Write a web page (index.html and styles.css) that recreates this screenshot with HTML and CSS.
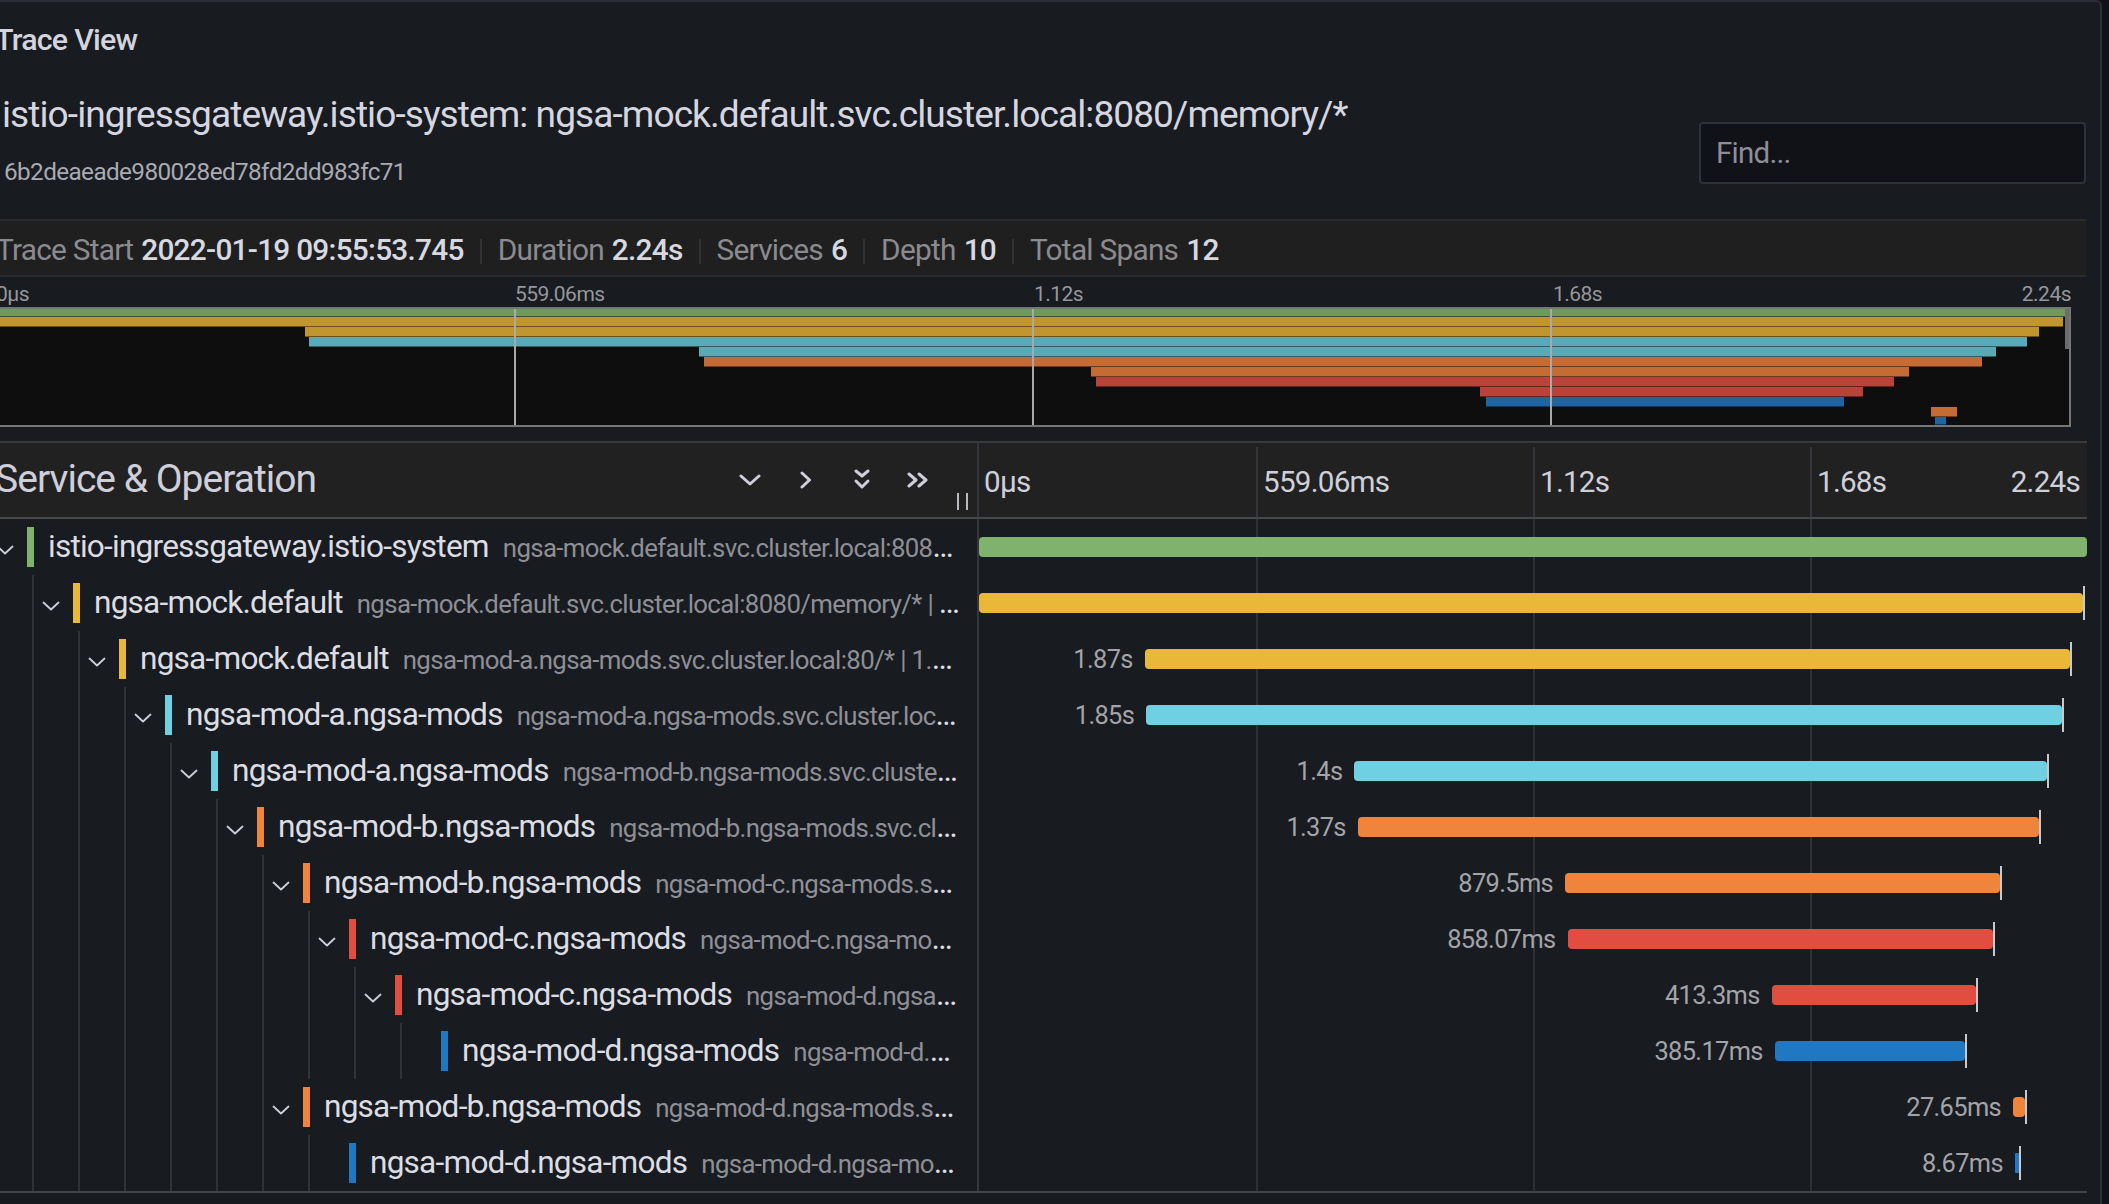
FILE: index.html
```html
<!DOCTYPE html>
<html lang="en">
<head>
<meta charset="utf-8">
<title>Trace View</title>
<link rel="stylesheet" href="styles.css">
</head>
<body>
<div class="panel">
  <div class="panel-header"><h2 class="panel-title">Trace View</h2></div>

  <div class="trace-head">
    <div class="trace-titles">
      <h1 class="trace-title">istio-ingressgateway.istio-system: ngsa-mock.default.svc.cluster.local:8080/memory/*</h1>
      <div class="trace-id">6b2deaeade980028ed78fd2dd983fc71</div>
    </div>
    <input class="find" type="text" placeholder="Find...">
  </div>

  <div class="stats">
    <div class="stat"><span class="stat-label">Trace Start</span><strong>2022-01-19 09:55:53.745</strong></div>
    <span class="sep"></span>
    <div class="stat"><span class="stat-label">Duration</span><strong>2.24s</strong></div>
    <span class="sep"></span>
    <div class="stat"><span class="stat-label">Services</span><strong>6</strong></div>
    <span class="sep"></span>
    <div class="stat"><span class="stat-label">Depth</span><strong>10</strong></div>
    <span class="sep"></span>
    <div class="stat"><span class="stat-label">Total Spans</span><strong>12</strong></div>
  </div>

  <div class="minimap">
    <div class="mm-ticks">
      <div class="mm-tick">0μs</div>
      <div class="mm-tick">559.06ms</div>
      <div class="mm-tick">1.12s</div>
      <div class="mm-tick last"><span>1.68s</span><span>2.24s</span></div>
    </div>
    <div class="mm-canvas">
      <div class="mm-row"><div class="mm-bar m-green" style="margin-left:0%;width:99.9%"></div></div>
      <div class="mm-row"><div class="mm-bar m-yellow" style="margin-left:0%;width:99.7%"></div></div>
      <div class="mm-row"><div class="mm-bar m-yellow" style="margin-left:14.86%;width:83.7%"></div></div>
      <div class="mm-row"><div class="mm-bar m-cyan" style="margin-left:15.06%;width:82.9%"></div></div>
      <div class="mm-row"><div class="mm-bar m-cyan" style="margin-left:33.88%;width:62.6%"></div></div>
      <div class="mm-row"><div class="mm-bar m-orange" style="margin-left:34.12%;width:61.7%"></div></div>
      <div class="mm-row"><div class="mm-bar m-orange" style="margin-left:52.8%;width:39.5%"></div></div>
      <div class="mm-row"><div class="mm-bar m-red" style="margin-left:53.04%;width:38.5%"></div></div>
      <div class="mm-row"><div class="mm-bar m-red" style="margin-left:71.57%;width:18.5%"></div></div>
      <div class="mm-row"><div class="mm-bar m-blue" style="margin-left:71.86%;width:17.3%"></div></div>
      <div class="mm-row"><div class="mm-bar m-orange" style="margin-left:93.34%;width:1.25%"></div></div>
      <div class="mm-row"><div class="mm-bar m-blue" style="margin-left:93.53%;width:0.53%"></div></div>
      <div class="mm-grid"></div>
      <div class="mm-handle"></div>
    </div>
  </div>

  <div class="timeline">
    <div class="tl-header">
      <div class="tl-head-left">
        <h3 class="tl-title">Service &amp; Operation</h3>
        <div class="hbtns">
          <span class="hbtn"><svg width="22" height="12" viewBox="0 0 22 12"><polyline points="2,2 11,10 20,2"/></svg></span>
          <span class="hbtn"><svg width="12" height="18" viewBox="0 0 12 18"><polyline points="2,2 9.5,9 2,16"/></svg></span>
          <span class="hbtn"><svg width="18" height="22" viewBox="0 0 18 22"><polyline points="3,2 9,7 15,2"/><polyline points="3,12 9,18 15,12"/></svg></span>
          <span class="hbtn"><svg width="24" height="16" viewBox="0 0 24 16"><polyline points="3,2 10,8 3,14"/><polyline points="13,2 20,8 13,14"/></svg></span>
        </div>
        <span class="resizer"></span>
      </div>
      <div class="tl-ticks">
        <div class="tick"><span>0μs</span></div>
        <div class="tick"><span>559.06ms</span></div>
        <div class="tick"><span>1.12s</span></div>
        <div class="tick last"><span>1.68s</span><span>2.24s</span></div>
      </div>
    </div>

    <div class="tl-rows">
      <!-- 1 -->
      <div class="row">
        <div class="name-cell">
          <span class="toggle"><svg width="18" height="10" viewBox="0 0 18 10"><polyline points="1.5,1.5 9,8.5 16.5,1.5"/></svg></span>
          <span class="svc-color c-green"></span>
          <span class="label"><span class="svc">istio-ingressgateway.istio-system</span><small class="op">ngsa-mock.default.svc.cluster.local:8080/memory/* | 2.24s</small></span>
        </div>
        <div class="view-cell">
          <div class="bar c-green" style="width:100%"></div>
        </div>
      </div>
      <!-- 2 -->
      <div class="row">
        <div class="name-cell">
          <span class="guide"></span>
          <span class="toggle"><svg width="18" height="10" viewBox="0 0 18 10"><polyline points="1.5,1.5 9,8.5 16.5,1.5"/></svg></span>
          <span class="svc-color c-yellow"></span>
          <span class="label"><span class="svc">ngsa-mock.default</span><small class="op">ngsa-mock.default.svc.cluster.local:8080/memory/* | 2.23s</small></span>
        </div>
        <div class="view-cell">
          <div class="bar c-yellow" style="width:99.6%"></div><span class="bar-end"></span>
        </div>
      </div>
      <!-- 3 -->
      <div class="row">
        <div class="name-cell">
          <span class="guide"></span><span class="guide"></span>
          <span class="toggle"><svg width="18" height="10" viewBox="0 0 18 10"><polyline points="1.5,1.5 9,8.5 16.5,1.5"/></svg></span>
          <span class="svc-color c-yellow"></span>
          <span class="label"><span class="svc">ngsa-mock.default</span><small class="op">ngsa-mod-a.ngsa-mods.svc.cluster.local:80/* | 1.87s</small></span>
        </div>
        <div class="view-cell">
          <div class="bar-lead" style="width:14.96%"><span>1.87s</span></div>
          <div class="bar c-yellow" style="width:83.5%"></div><span class="bar-end"></span>
        </div>
      </div>
      <!-- 4 -->
      <div class="row">
        <div class="name-cell">
          <span class="guide"></span><span class="guide"></span><span class="guide"></span>
          <span class="toggle"><svg width="18" height="10" viewBox="0 0 18 10"><polyline points="1.5,1.5 9,8.5 16.5,1.5"/></svg></span>
          <span class="svc-color c-cyan"></span>
          <span class="label"><span class="svc">ngsa-mod-a.ngsa-mods</span><small class="op">ngsa-mod-a.ngsa-mods.svc.cluster.local:80/* | 1.85s</small></span>
        </div>
        <div class="view-cell">
          <div class="bar-lead" style="width:15.09%"><span>1.85s</span></div>
          <div class="bar c-cyan" style="width:82.66%"></div><span class="bar-end"></span>
        </div>
      </div>
      <!-- 5 -->
      <div class="row">
        <div class="name-cell">
          <span class="guide"></span><span class="guide"></span><span class="guide"></span><span class="guide"></span>
          <span class="toggle"><svg width="18" height="10" viewBox="0 0 18 10"><polyline points="1.5,1.5 9,8.5 16.5,1.5"/></svg></span>
          <span class="svc-color c-cyan"></span>
          <span class="label"><span class="svc">ngsa-mod-a.ngsa-mods</span><small class="op">ngsa-mod-b.ngsa-mods.svc.cluster.local:80/* | 1.4s</small></span>
        </div>
        <div class="view-cell">
          <div class="bar-lead" style="width:33.88%"><span>1.4s</span></div>
          <div class="bar c-cyan" style="width:62.5%"></div><span class="bar-end"></span>
        </div>
      </div>
      <!-- 6 -->
      <div class="row">
        <div class="name-cell">
          <span class="guide"></span><span class="guide"></span><span class="guide"></span><span class="guide"></span><span class="guide"></span>
          <span class="toggle"><svg width="18" height="10" viewBox="0 0 18 10"><polyline points="1.5,1.5 9,8.5 16.5,1.5"/></svg></span>
          <span class="svc-color c-orange"></span>
          <span class="label"><span class="svc">ngsa-mod-b.ngsa-mods</span><small class="op">ngsa-mod-b.ngsa-mods.svc.cluster.local:80/* | 1.37s</small></span>
        </div>
        <div class="view-cell">
          <div class="bar-lead" style="width:34.19%"><span>1.37s</span></div>
          <div class="bar c-orange" style="width:61.5%"></div><span class="bar-end"></span>
        </div>
      </div>
      <!-- 7 -->
      <div class="row">
        <div class="name-cell">
          <span class="guide"></span><span class="guide"></span><span class="guide"></span><span class="guide"></span><span class="guide"></span><span class="guide"></span>
          <span class="toggle"><svg width="18" height="10" viewBox="0 0 18 10"><polyline points="1.5,1.5 9,8.5 16.5,1.5"/></svg></span>
          <span class="svc-color c-orange"></span>
          <span class="label"><span class="svc">ngsa-mod-b.ngsa-mods</span><small class="op">ngsa-mod-c.ngsa-mods.svc.cluster.local:80/* | 879.5ms</small></span>
        </div>
        <div class="view-cell">
          <div class="bar-lead" style="width:52.89%"><span>879.5ms</span></div>
          <div class="bar c-orange" style="width:39.25%"></div><span class="bar-end"></span>
        </div>
      </div>
      <!-- 8 -->
      <div class="row">
        <div class="name-cell">
          <span class="guide"></span><span class="guide"></span><span class="guide"></span><span class="guide"></span><span class="guide"></span><span class="guide"></span><span class="guide"></span>
          <span class="toggle"><svg width="18" height="10" viewBox="0 0 18 10"><polyline points="1.5,1.5 9,8.5 16.5,1.5"/></svg></span>
          <span class="svc-color c-red"></span>
          <span class="label"><span class="svc">ngsa-mod-c.ngsa-mods</span><small class="op">ngsa-mod-c.ngsa-mods.svc.cluster.local:80/* | 858.07ms</small></span>
        </div>
        <div class="view-cell">
          <div class="bar-lead" style="width:53.12%"><span>858.07ms</span></div>
          <div class="bar c-red" style="width:38.39%"></div><span class="bar-end"></span>
        </div>
      </div>
      <!-- 9 -->
      <div class="row">
        <div class="name-cell">
          <span class="guide"></span><span class="guide"></span><span class="guide"></span><span class="guide"></span><span class="guide"></span><span class="guide"></span><span class="guide"></span><span class="guide"></span>
          <span class="toggle"><svg width="18" height="10" viewBox="0 0 18 10"><polyline points="1.5,1.5 9,8.5 16.5,1.5"/></svg></span>
          <span class="svc-color c-red"></span>
          <span class="label"><span class="svc">ngsa-mod-c.ngsa-mods</span><small class="op">ngsa-mod-d.ngsa-mods.svc.cluster.local:80/* | 413.3ms</small></span>
        </div>
        <div class="view-cell">
          <div class="bar-lead" style="width:71.54%"><span>413.3ms</span></div>
          <div class="bar c-red" style="width:18.43%"></div><span class="bar-end"></span>
        </div>
      </div>
      <!-- 10 -->
      <div class="row">
        <div class="name-cell">
          <span class="guide"></span><span class="guide"></span><span class="guide"></span><span class="guide"></span><span class="guide"></span><span class="guide"></span><span class="guide"></span><span class="guide"></span><span class="guide"></span>
          <span class="toggle"></span>
          <span class="svc-color c-blue"></span>
          <span class="label"><span class="svc">ngsa-mod-d.ngsa-mods</span><small class="op">ngsa-mod-d.ngsa-mods.svc.cluster.local:80/* | 385.17ms</small></span>
        </div>
        <div class="view-cell">
          <div class="bar-lead" style="width:71.82%"><span>385.17ms</span></div>
          <div class="bar c-blue" style="width:17.16%"></div><span class="bar-end"></span>
        </div>
      </div>
      <!-- 11 -->
      <div class="row">
        <div class="name-cell">
          <span class="guide"></span><span class="guide"></span><span class="guide"></span><span class="guide"></span><span class="guide"></span><span class="guide"></span>
          <span class="toggle"><svg width="18" height="10" viewBox="0 0 18 10"><polyline points="1.5,1.5 9,8.5 16.5,1.5"/></svg></span>
          <span class="svc-color c-orange"></span>
          <span class="label"><span class="svc">ngsa-mod-b.ngsa-mods</span><small class="op">ngsa-mod-d.ngsa-mods.svc.cluster.local:80/* | 27.65ms</small></span>
        </div>
        <div class="view-cell">
          <div class="bar-lead" style="width:93.32%"><span>27.65ms</span></div>
          <div class="bar c-orange" style="width:1.08%"></div><span class="bar-end"></span>
        </div>
      </div>
      <!-- 12 -->
      <div class="row">
        <div class="name-cell">
          <span class="guide"></span><span class="guide"></span><span class="guide"></span><span class="guide"></span><span class="guide"></span><span class="guide"></span><span class="guide"></span>
          <span class="toggle"></span>
          <span class="svc-color c-blue"></span>
          <span class="label"><span class="svc">ngsa-mod-d.ngsa-mods</span><small class="op">ngsa-mod-d.ngsa-mods.svc.cluster.local:80/* | 8.67ms</small></span>
        </div>
        <div class="view-cell">
          <div class="bar-lead" style="width:93.5%"><span>8.67ms</span></div>
          <div class="bar c-blue thin" style="width:0.32%"></div><span class="bar-end"></span>
        </div>
      </div>
    </div>
  </div>
</div>
</body>
</html>
```

FILE: styles.css
```css
* {
  box-sizing: border-box;
  letter-spacing: -0.025em;
}

html, body {
  margin: 0;
  padding: 0;
}

body {
  width: 2109px;
  height: 1204px;
  overflow: hidden;
  background: #111217;
  font-family: Roboto, "Noto Sans", "Liberation Sans", sans-serif;
  color: #ccccdc;
}

h1, h2, h3 {
  margin: 0;
  font-weight: 400;
}

/* ---------- panel ---------- */
.panel {
  margin-left: -16px;
  width: 2118px;
  height: 1260px;
  background: #181b1f;
  border: 2px solid #2c2f35;
  border-radius: 6px;
  padding: 0 14px 0 9px;
}

.panel-header {
  padding-top: 21px;
}

.panel-title {
  font-size: 30.4px;
  line-height: 34px;
  font-weight: 500;
  color: #d4d4de;
}

/* ---------- trace header ---------- */
.trace-head {
  display: flex;
  align-items: flex-start;
}

.trace-titles {
  flex: 1;
  min-width: 0;
  padding-left: 7px;
}

.trace-title {
  margin-top: 36px;
  font-size: 37.1px;
  line-height: 44px;
  color: #d6d6e0;
  white-space: nowrap;
}

.trace-id {
  margin-top: 20px;
  margin-left: 2px;
  font-size: 24.3px;
  line-height: 29px;
  color: #a9aab2;
}

.find {
  flex: none;
  margin-top: 65px;
  width: 387px;
  height: 62px;
  background: #111217;
  border: 2px solid #2f3238;
  border-radius: 4px;
  padding: 0 15px;
  font: inherit;
  font-size: 29.5px;
  color: #ccccdc;
  outline: none;
}

.find::placeholder {
  color: #8d8e97;
}

/* ---------- stats ---------- */
.stats {
  margin-top: 33px;
  height: 58px;
  display: flex;
  align-items: flex-start;
  background: #1f1f20;
  border-top: 2px solid #2b2b2d;
  border-bottom: 2px solid #2b2b2d;
  padding: 11px 0 0 1px;
  font-size: 29.8px;
  line-height: 35px;
  white-space: nowrap;
}

.stat-label {
  color: #8b8b8f;
  margin-right: 8px;
}

.stat strong {
  font-weight: 500;
  color: #d8d9e0;
}

.sep {
  flex: none;
  width: 2px;
  height: 25px;
  margin: 7px 16px 0 16px;
  background: #313133;
}

/* ---------- minimap ---------- */
.minimap {
  width: calc(100% - 15px);
}

.mm-ticks {
  margin-top: 5px;
  display: flex;
  font-size: 21px;
  line-height: 25px;
  color: #96969b;
  white-space: nowrap;
}

.mm-tick {
  width: 25%;
  padding-left: 1px;
}

.mm-tick.last {
  display: flex;
  justify-content: space-between;
  padding-right: 0;
}

.mm-canvas {
  position: relative;
  height: 120px;
  border: 2px solid #767676;
  background: #0e0e0e;
}

.mm-row {
  height: 10px;
}

.mm-row:first-child,
.mm-row:nth-child(12) {
  height: 8px;
}

.mm-bar {
  height: 100%;
  box-shadow: inset 0 -1px 0 rgba(0, 0, 0, 0.45);
}

.m-green { background: #6d9a5d; }
.m-yellow { background: #c1962f; }
.m-cyan { background: #5ba9b5; }
.m-orange { background: #c46c33; }
.m-red { background: #b9423a; }
.m-blue { background: #1e65a2; }

.mm-grid {
  position: absolute;
  inset: 0;
  pointer-events: none;
  background-image: linear-gradient(to right,
    transparent calc(25% - 1px), #a9a9a9 calc(25% - 1px), #a9a9a9 calc(25% + 1px), transparent calc(25% + 1px),
    transparent calc(50% - 1px), #a9a9a9 calc(50% - 1px), #a9a9a9 calc(50% + 1px), transparent calc(50% + 1px),
    transparent calc(75% - 1px), #a9a9a9 calc(75% - 1px), #a9a9a9 calc(75% + 1px), transparent calc(75% + 1px));
}

.mm-handle {
  position: absolute;
  right: 0;
  top: 0;
  width: 4px;
  height: 40px;
  background: #6c6c6c;
}

/* ---------- timeline ---------- */
.timeline {
  margin-top: 14px;
  margin-right: -1px;
}

.tl-header {
  display: flex;
  height: 78px;
  background: #212121;
  border-top: 2px solid #3a3a3a;
  border-bottom: 2px solid #474747;
}

.tl-head-left {
  flex: none;
  width: 984px;
  display: flex;
  align-items: center;
  padding-right: 9px;
  border-right: 2px solid #34363b;
}

.tl-title {
  flex: 1;
  min-width: 0;
  font-size: 39px;
  line-height: 46px;
  padding-bottom: 2px;
  color: #cfcfdb;
  white-space: nowrap;
}

.hbtns {
  display: flex;
  flex: none;
}

.hbtn {
  width: 56px;
  display: flex;
  justify-content: center;
  align-items: center;
}

.hbtn svg polyline,
.toggle svg polyline {
  fill: none;
  stroke: #cfcfdb;
  stroke-linecap: round;
  stroke-linejoin: round;
}

.hbtn svg polyline {
  stroke-width: 3;
}

.resizer {
  flex: none;
  align-self: flex-end;
  width: 11px;
  height: 17px;
  margin: 0 0 7px 11px;
  border-left: 2px solid #b9b9bf;
  border-right: 2px solid #b9b9bf;
}

.tl-ticks {
  flex: 1;
  display: flex;
  align-items: center;
  padding-top: 4px;
  font-size: 29.6px;
  line-height: 35px;
  color: #cfcfd9;
  white-space: nowrap;
}

.tick {
  width: 25%;
  height: 100%;
  display: flex;
  align-items: center;
  padding-left: 5px;
}

.tick + .tick {
  border-left: 2px solid #34363b;
}

.tick.last {
  justify-content: space-between;
  padding-right: 7px;
}

.tl-rows {
  border-bottom: 2px solid #454547;
}

.row {
  display: flex;
  height: 56px;
}

.name-cell {
  flex: none;
  width: 984px;
  display: flex;
  align-items: center;
  padding-right: 14px;
  border-right: 2px solid #34363b;
}

.guide {
  flex: none;
  width: 46px;
  align-self: stretch;
  background-image: linear-gradient(to right, transparent 37px, #303338 37px, #303338 39px, transparent 39px);
}

.toggle {
  flex: none;
  width: 20px;
  display: flex;
  justify-content: center;
  align-items: center;
  margin-top: 5px;
}

.toggle svg polyline {
  stroke-width: 1.8;
}

.svc-color {
  flex: none;
  width: 7px;
  height: 40px;
  margin: 0 14px 0 12px;
}

.label {
  flex: 1;
  min-width: 0;
  display: block;
  overflow: hidden;
  white-space: nowrap;
  text-overflow: ellipsis;
  font-size: 31.6px;
  line-height: 38px;
  color: #dcdde3;
}

.op {
  margin-left: 14px;
  font-size: 25.8px;
  color: #8e8f96;
}

.view-cell {
  flex: 1;
  display: flex;
  align-items: center;
  background-image: linear-gradient(to right,
    transparent 25%, #2e3035 25%, #2e3035 calc(25% + 2px), transparent calc(25% + 2px),
    transparent 50%, #2e3035 50%, #2e3035 calc(50% + 2px), transparent calc(50% + 2px),
    transparent 75%, #2e3035 75%, #2e3035 calc(75% + 2px), transparent calc(75% + 2px));
}

.bar-lead {
  flex: none;
  display: flex;
  justify-content: flex-end;
  white-space: nowrap;
  font-size: 25.4px;
  line-height: 30px;
  color: #a3a3a9;
}

.bar-lead span {
  margin-right: 12px;
}

.bar {
  flex: none;
  height: 20px;
  border-radius: 4px;
}

.bar.thin {
  border-radius: 1px;
}

.bar-end {
  flex: none;
  width: 2px;
  height: 34px;
  margin-left: 0;
  background: #c9c9cc;
}

.c-green { background: #7eb26d; }
.c-yellow { background: #eab839; }
.c-cyan { background: #6ed0e0; }
.c-orange { background: #ef843c; }
.c-red { background: #e24d42; }
.c-blue { background: #1f78c1; }
```
